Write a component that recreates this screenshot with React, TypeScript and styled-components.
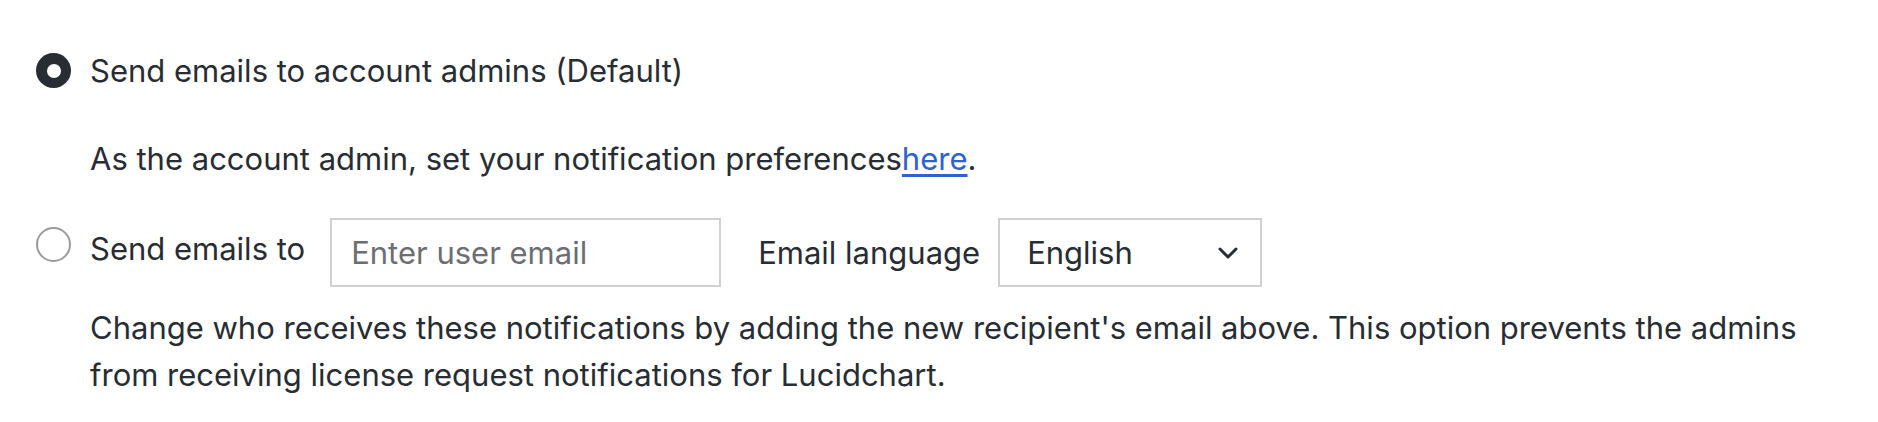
import React from "react";
import styled, { createGlobalStyle } from "styled-components";

const GlobalStyle = createGlobalStyle`
  html, body { margin: 0; padding: 0; background: #ffffff; }
  body { font-family: "Inter", "Noto Sans", sans-serif; color: #282c33; }
  * { box-sizing: border-box; }
`;

const Page = styled.div`
  padding: 47px 28px 0 36px;
  display: flex;
  flex-direction: column;
  font-size: 31px;
  line-height: 47px;
`;

const Row = styled.div<{ $mt?: number }>`
  display: flex;
  align-items: center;
  margin-top: ${(p) => p.$mt ?? 0}px;
`;

const Radio = styled.span<{ $checked?: boolean; $shift?: number }>`
  flex: none;
  width: 35px;
  height: 35px;
  border-radius: 50%;
  margin-right: 19px;
  margin-bottom: ${(p) => p.$shift ?? 0}px;
  display: flex;
  align-items: center;
  justify-content: center;
  background: ${(p) => (p.$checked ? "#282c33" : "#ffffff")};
  border: ${(p) => (p.$checked ? "none" : "2px solid #9b9b9b")};
  &::after {
    content: "";
    display: ${(p) => (p.$checked ? "block" : "none")};
    width: 14px;
    height: 14px;
    border-radius: 50%;
    background: #ffffff;
  }
`;

const Label = styled.span<{ $shift?: number }>`
  margin-bottom: ${(p) => p.$shift ?? 0}px;
  white-space: nowrap;
`;

const Indented = styled.div<{ $mt?: number }>`
  margin-left: 54px;
  margin-top: ${(p) => p.$mt ?? 0}px;
`;

const Link = styled.a`
  color: #2d62d0;
  text-decoration: underline;
  text-underline-offset: 4px;
`;

const TextInput = styled.input`
  width: 391px;
  height: 69px;
  margin-left: 25px;
  margin-right: 37px;
  border: 2px solid #cfd0d4;
  padding: 0 19px;
  font: inherit;
  font-size: 31px;
  color: #282c33;
  outline: none;
  &::placeholder { color: #6c6e73; }
`;

const SelectBox = styled.div`
  width: 264px;
  height: 69px;
  margin-left: 18px;
  border: 2px solid #cfd0d4;
  padding: 0 22px 0 27px;
  display: flex;
  align-items: center;
  justify-content: space-between;
`;

const Chevron = () => (
  <svg width="20" height="12" viewBox="0 0 20 12" fill="none">
    <path d="M2 2l8 8 8-8" stroke="#282c33" strokeWidth="3" strokeLinecap="round" strokeLinejoin="round" />
  </svg>
);

export default function App() {
  return (
    <>
      <GlobalStyle />
      <Page>
        <Row>
          <Radio $checked />
          <Label>Send emails to account admins (Default)</Label>
        </Row>
        <Indented $mt={41}>
          As the account admin, set your notification preferences<Link href="#">here</Link>.
        </Indented>
        <Row $mt={36}>
          <Radio $shift={16} />
          <Label $shift={8}>Send emails to</Label>
          <TextInput placeholder="Enter user email" />
          <Label>Email language</Label>
          <SelectBox>
            <span>English</span>
            <Chevron />
          </SelectBox>
        </Row>
        <Indented $mt={17}>
          Change who receives these notifications by adding the new recipient's email above. This option prevents the admins from receiving license request notifications for Lucidchart.
        </Indented>
      </Page>
    </>
  );
}
